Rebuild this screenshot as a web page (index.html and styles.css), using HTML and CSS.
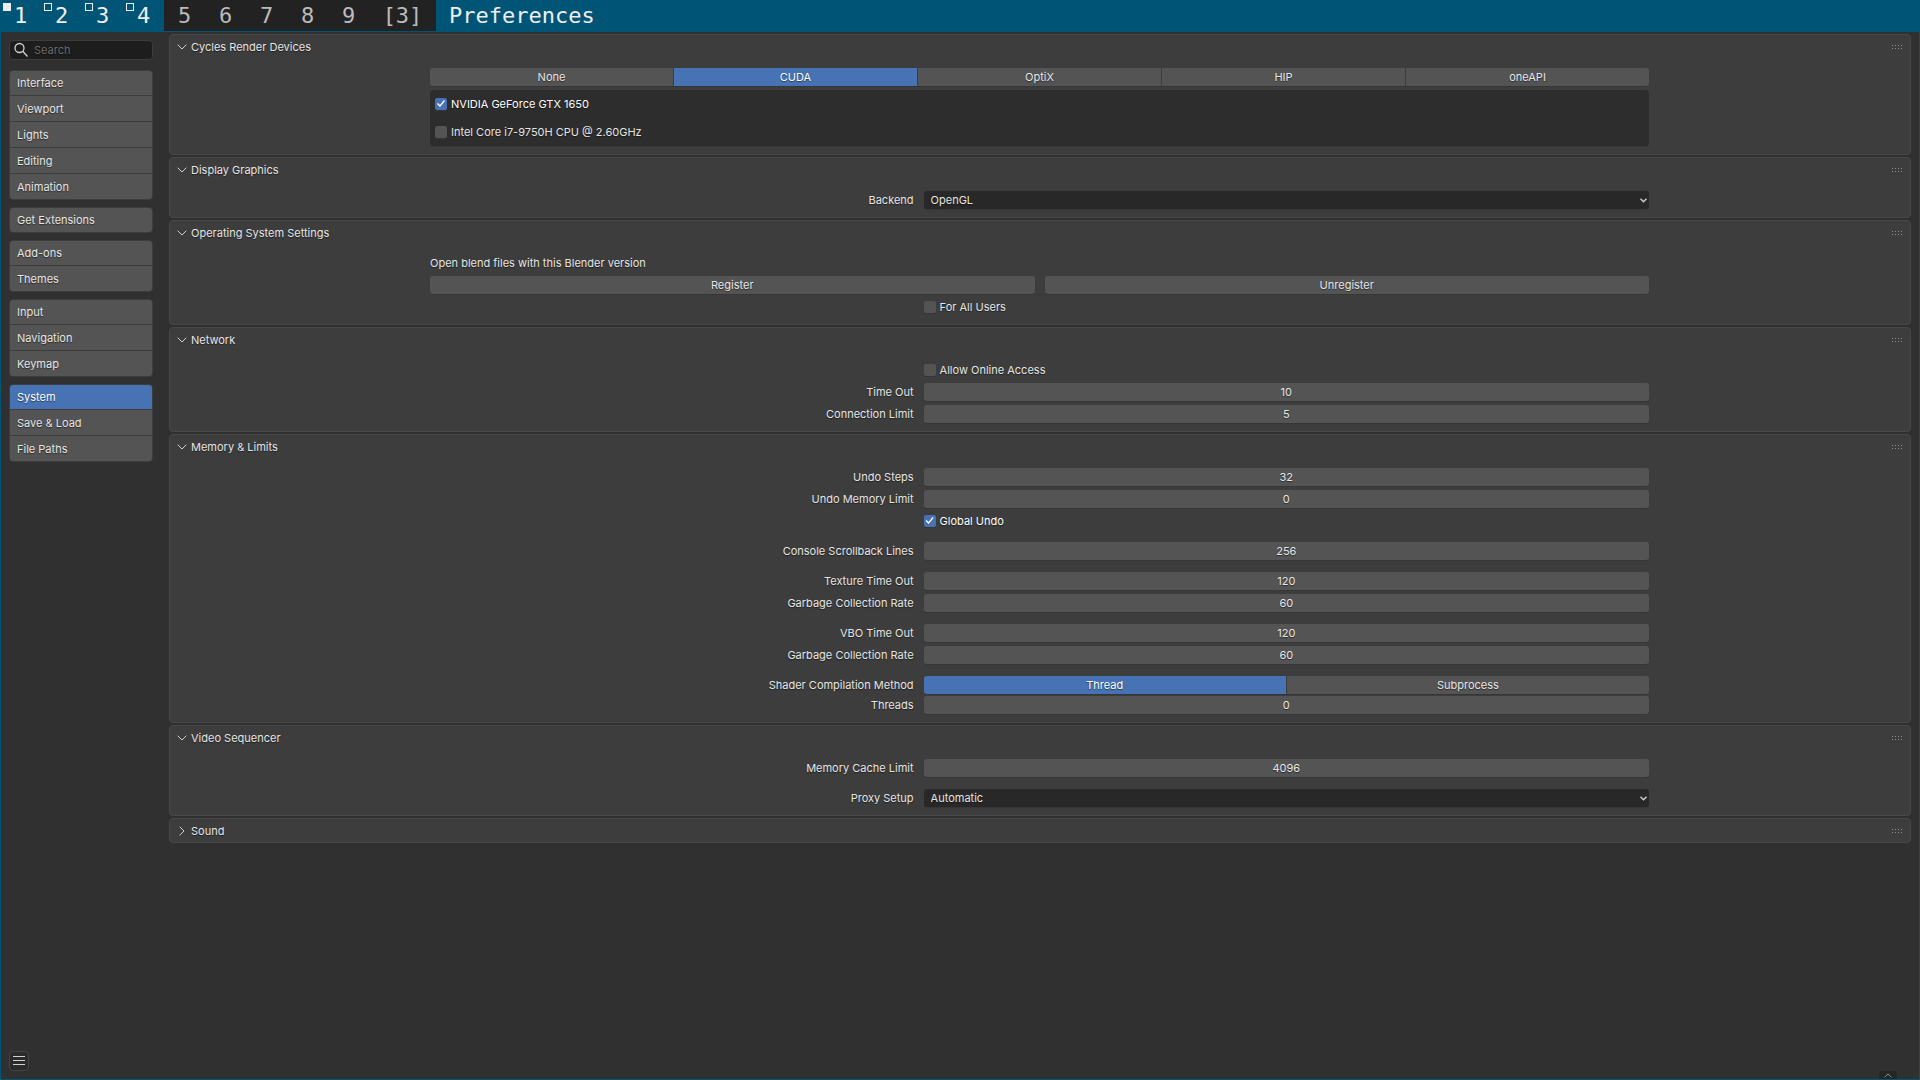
FILE: index.html
```html
<!DOCTYPE html>
<html lang="en">
<head>
    <meta charset="utf-8">
    <title>Preferences</title>
    <link rel="stylesheet" href="styles.css">
</head>
<body>
    <header class="bar">
        <nav class="tags">
            <a href="#" class="tag selected focused">1</a>
            <a href="#" class="tag selected occupied">2</a>
            <a href="#" class="tag selected occupied">3</a>
            <a href="#" class="tag selected occupied">4</a>
            <a href="#" class="tag">5</a>
            <a href="#" class="tag">6</a>
            <a href="#" class="tag">7</a>
            <a href="#" class="tag">8</a>
            <a href="#" class="tag">9</a>
            <a href="#" class="tag layout">[3]</a>
        </nav>
        <h1 class="bar-title">Preferences</h1>
    </header>

    <div class="window">
        <aside class="sidebar">
            <label class="search">
                <svg width="14" height="16" viewBox="0 0 14 16"><circle cx="5.5" cy="6" r="4.5"/><path d="M8.8 9.3L13.5 14.5"/></svg>
                <input type="text" placeholder="Search" aria-label="Search">
            </label>
            <nav class="nav">
                <div class="nav-group">
                    <button>Interface</button>
                    <button>Viewport</button>
                    <button>Lights</button>
                    <button>Editing</button>
                    <button>Animation</button>
                </div>
                <div class="nav-group">
                    <button>Get Extensions</button>
                </div>
                <div class="nav-group">
                    <button>Add-ons</button>
                    <button>Themes</button>
                </div>
                <div class="nav-group">
                    <button>Input</button>
                    <button>Navigation</button>
                    <button>Keymap</button>
                </div>
                <div class="nav-group">
                    <button class="active">System</button>
                    <button>Save &amp; Load</button>
                    <button>File Paths</button>
                </div>
            </nav>
            <button class="menu" aria-label="Menu">
                <svg width="12" height="10" viewBox="0 0 12 10"><path d="M0 .5H12M0 4.5H12M0 8.5H12"/></svg>
            </button>
        </aside>

        <main class="panels">
            <details class="panel" open>
                <summary>
                    <svg class="arrow" width="10" height="10" viewBox="0 0 10 10"><path d="M.7 2.7L5 7L9.3 2.7"/></svg>
                    Cycles Render Devices
                    <span class="grip"></span>
                </summary>
                <div class="content">
                    <div class="segments">
                        <button>None</button>
                        <button class="active">CUDA</button>
                        <button>OptiX</button>
                        <button>HIP</button>
                        <button>oneAPI</button>
                    </div>
                    <div class="devices">
                        <label class="check"><input type="checkbox" checked><span>NVIDIA GeForce GTX 1650</span></label>
                        <label class="check"><input type="checkbox"><span>Intel Core i7-9750H CPU @ 2.60GHz</span></label>
                    </div>
                </div>
            </details>

            <details class="panel" open>
                <summary>
                    <svg class="arrow" width="10" height="10" viewBox="0 0 10 10"><path d="M.7 2.7L5 7L9.3 2.7"/></svg>
                    Display Graphics
                    <span class="grip"></span>
                </summary>
                <div class="content">
                    <div class="row">
                        <label for="backend">Backend</label>
                        <div class="dropdown">
                            <select id="backend"><option>OpenGL</option></select>
                            <svg width="7" height="5" viewBox="0 0 7 5"><path d="M.5 .8L3.5 3.8L6.5 .8"/></svg>
                        </div>
                    </div>
                </div>
            </details>

            <details class="panel" open>
                <summary>
                    <svg class="arrow" width="10" height="10" viewBox="0 0 10 10"><path d="M.7 2.7L5 7L9.3 2.7"/></svg>
                    Operating System Settings
                    <span class="grip"></span>
                </summary>
                <div class="content">
                    <p class="text">Open blend files with this Blender version</p>
                    <div class="pair">
                        <button>Register</button>
                        <button>Unregister</button>
                    </div>
                    <div class="row">
                        <label class="check"><input type="checkbox"><span>For All Users</span></label>
                    </div>
                </div>
            </details>

            <details class="panel" open>
                <summary>
                    <svg class="arrow" width="10" height="10" viewBox="0 0 10 10"><path d="M.7 2.7L5 7L9.3 2.7"/></svg>
                    Network
                    <span class="grip"></span>
                </summary>
                <div class="content">
                    <div class="row">
                        <label class="check"><input type="checkbox"><span>Allow Online Access</span></label>
                    </div>
                    <div class="row">
                        <label for="timeout">Time Out</label>
                        <input class="number" id="timeout" type="text" value="10">
                    </div>
                    <div class="row">
                        <label for="connections">Connection Limit</label>
                        <input class="number" id="connections" type="text" value="5">
                    </div>
                </div>
            </details>

            <details class="panel" open>
                <summary>
                    <svg class="arrow" width="10" height="10" viewBox="0 0 10 10"><path d="M.7 2.7L5 7L9.3 2.7"/></svg>
                    Memory &amp; Limits
                    <span class="grip"></span>
                </summary>
                <div class="content">
                    <div class="row">
                        <label for="undo-steps">Undo Steps</label>
                        <input class="number" id="undo-steps" type="text" value="32">
                    </div>
                    <div class="row">
                        <label for="undo-memory">Undo Memory Limit</label>
                        <input class="number" id="undo-memory" type="text" value="0">
                    </div>
                    <div class="row">
                        <label class="check"><input type="checkbox" checked><span>Global Undo</span></label>
                    </div>
                    <div class="row spaced">
                        <label for="scrollback">Console Scrollback Lines</label>
                        <input class="number" id="scrollback" type="text" value="256">
                    </div>
                    <div class="row spaced">
                        <label for="texture-timeout">Texture Time Out</label>
                        <input class="number" id="texture-timeout" type="text" value="120">
                    </div>
                    <div class="row">
                        <label for="texture-rate">Garbage Collection Rate</label>
                        <input class="number" id="texture-rate" type="text" value="60">
                    </div>
                    <div class="row spaced">
                        <label for="vbo-timeout">VBO Time Out</label>
                        <input class="number" id="vbo-timeout" type="text" value="120">
                    </div>
                    <div class="row">
                        <label for="vbo-rate">Garbage Collection Rate</label>
                        <input class="number" id="vbo-rate" type="text" value="60">
                    </div>
                    <div class="joined spaced">
                        <div class="row">
                            <span class="row-label" id="shader-label">Shader Compilation Method</span>
                            <div class="segments" role="group" aria-labelledby="shader-label">
                                <button class="active">Thread</button>
                                <button>Subprocess</button>
                            </div>
                        </div>
                        <div class="row">
                            <label for="threads">Threads</label>
                            <input class="number" id="threads" type="text" value="0">
                        </div>
                    </div>
                </div>
            </details>

            <details class="panel" open>
                <summary>
                    <svg class="arrow" width="10" height="10" viewBox="0 0 10 10"><path d="M.7 2.7L5 7L9.3 2.7"/></svg>
                    Video Sequencer
                    <span class="grip"></span>
                </summary>
                <div class="content">
                    <div class="row">
                        <label for="cache">Memory Cache Limit</label>
                        <input class="number" id="cache" type="text" value="4096">
                    </div>
                    <div class="row spaced">
                        <label for="proxy">Proxy Setup</label>
                        <div class="dropdown">
                            <select id="proxy"><option>Automatic</option></select>
                            <svg width="7" height="5" viewBox="0 0 7 5"><path d="M.5 .8L3.5 3.8L6.5 .8"/></svg>
                        </div>
                    </div>
                </div>
            </details>

            <details class="panel">
                <summary>
                    <svg class="arrow" width="10" height="10" viewBox="0 0 10 10"><path d="M.7 2.7L5 7L9.3 2.7"/></svg>
                    Sound
                    <span class="grip"></span>
                </summary>
            </details>
        </main>

        <button class="expand" aria-label="Show header">
            <svg width="8" height="5" viewBox="0 0 8 5"><path d="M.5 4.3L4 .9L7.5 4.3"/></svg>
        </button>
    </div>
</body>
</html>
```

FILE: styles.css
```css
* {
    box-sizing: border-box;
}
body {
    display: flex;
    flex-direction: column;
    min-height: 100vh;
    margin: 0;
    background: #005577;
    color: #e6e6e6;
    font: 11px/18px Inter, sans-serif;
    text-shadow: 0 1px 1px rgba(0, 0, 0, 0.5);
}
button, input, select {
    margin: 0;
    padding: 0;
    border: 0;
    color: inherit;
    font: inherit;
    text-shadow: inherit;
}
svg {
    fill: none;
    stroke: #d0d0d0;
}

/* status bar */
.bar {
    display: flex;
    height: 31px;
    color: #eeeeee;
    font: 22px/31px "DejaVu Sans Mono", monospace;
    text-shadow: none;
}
.tags {
    display: flex;
    background: #222222;
}
.tag {
    position: relative;
    width: 41px;
    color: #bbbbbb;
    text-align: center;
    text-decoration: none;
}
.tag.layout {
    width: 67px;
}
.tag.selected {
    background: #005577;
    color: #eeeeee;
}
.focused::before, .occupied::before {
    content: "";
    position: absolute;
    top: 3px;
    left: 3px;
    width: 6px;
    height: 6px;
    border: 1px solid #eeeeee;
}
.focused::before {
    background: #eeeeee;
}
.bar-title {
    margin: 0;
    padding: 0 13px;
    font: inherit;
}

/* window */
.window {
    position: relative;
    display: flex;
    flex: 1;
    margin: 1px;
    background: #303030;
}
.sidebar {
    display: flex;
    flex-direction: column;
    width: 160px;
    padding: 8px;
}
.search {
    display: flex;
    align-items: center;
    gap: 6px;
    height: 20px;
    margin-bottom: 10px;
    padding: 0 4px;
    border: 1px solid #3d3d3d;
    border-radius: 4px;
    background: #1d1d1d;
}
.search input {
    flex: 1;
    min-width: 0;
    background: none;
}
.search input::placeholder {
    color: #6a6a6a;
}
.search svg {
    stroke-width: 1.3;
}
.nav {
    display: flex;
    flex-direction: column;
    gap: 7px;
}
.nav-group {
    display: flex;
    flex-direction: column;
    gap: 1px;
    border: 1px solid #3d3d3d;
    border-radius: 4px;
    background: #3d3d3d;
    overflow: hidden;
}
.nav-group button {
    height: 25px;
    padding: 0 7px;
    background: #545454;
    text-align: left;
}
.nav-group button:first-child {
    height: 24px;
}
button.active {
    background: #4772b3;
    color: #ffffff;
}
.menu {
    display: flex;
    align-items: center;
    justify-content: center;
    width: 20px;
    height: 20px;
    margin-top: auto;
    border: 1px solid #434343;
    border-radius: 4px;
    background: #2b2b2b;
}
.expand {
    position: absolute;
    right: 22px;
    bottom: 0;
    display: flex;
    align-items: center;
    justify-content: center;
    width: 18px;
    height: 8px;
    border-radius: 4px 4px 0 0;
    background: #262626;
}
.expand svg {
    stroke: #909090;
}

/* panels */
.panels {
    display: flex;
    flex: 1;
    flex-direction: column;
    gap: 2px;
    padding: 2px 8px 8px;
}
.panel {
    border: 1px solid #484848;
    border-radius: 4px;
    background: #3d3d3d;
}
.panel summary {
    display: flex;
    align-items: center;
    gap: 4px;
    height: 24px;
    margin-bottom: -1px;
    padding: 0 7px;
    list-style: none;
}
.panel:not([open]) .arrow {
    transform: rotate(-90deg);
}
.grip {
    width: 11px;
    height: 4px;
    margin-left: auto;
    background: conic-gradient(from 270deg at 1px 1px, #909090 90deg, transparent 0) 0 0 / 3px 3px;
}
.content {
    display: flex;
    flex-direction: column;
    gap: 4px;
    margin: 0 15% 0 calc(15% - 1px);
    padding: 10px 0 8px;
}
.row {
    display: grid;
    grid-template-columns: 2fr 3fr;
    column-gap: 10px;
    text-align: right;
}
.spaced {
    margin-top: 8px;
}
.joined {
    display: flex;
    flex-direction: column;
    gap: 2px;
}
.text {
    margin: 0;
}
.number, .segments, .pair button, .dropdown select {
    min-width: 0;
    height: 18px;
    border-radius: 3px;
    box-shadow: 0 1px 0 #363636;
}
.number {
    background: #545454;
    text-align: center;
}
.segments {
    display: flex;
    gap: 1px;
    overflow: hidden;
}
.segments button, .pair button {
    flex: 1;
    background: #545454;
}
.segments button.active {
    background: #4772b3;
}
.pair {
    display: flex;
    gap: 10px;
}
.dropdown {
    display: grid;
    align-items: center;
}
.dropdown select, .dropdown svg {
    grid-area: 1 / 1;
}
.dropdown select {
    appearance: none;
    padding: 0 7px;
    background: #282828;
}
.dropdown svg {
    justify-self: end;
    margin-right: 2px;
    stroke-width: 1.4;
    pointer-events: none;
}
.devices {
    display: flex;
    flex-direction: column;
    padding: 0 5px;
    border-radius: 4px;
    background: #2d2d2d;
    box-shadow: 0 1px 0 #363636;
}
.devices .check {
    height: 28px;
}
.check {
    display: flex;
    align-items: center;
    gap: 4px;
    height: 18px;
}
.row .check {
    grid-column: 2;
}
.check input {
    appearance: none;
    width: 12px;
    height: 12px;
    border-radius: 2px;
    background: #545454;
    box-shadow: 0 1px 0 #363636;
}
.check input:checked {
    background: #4772b3;
}
.check input:checked::before {
    content: "";
    display: block;
    width: 12px;
    height: 12px;
    background: #ffffff;
    clip-path: polygon(2px 6px, 3px 5px, 5px 7px, 9px 2px, 10px 3px, 5px 9px);
}
.check input:checked + span {
    color: #ffffff;
}
```
